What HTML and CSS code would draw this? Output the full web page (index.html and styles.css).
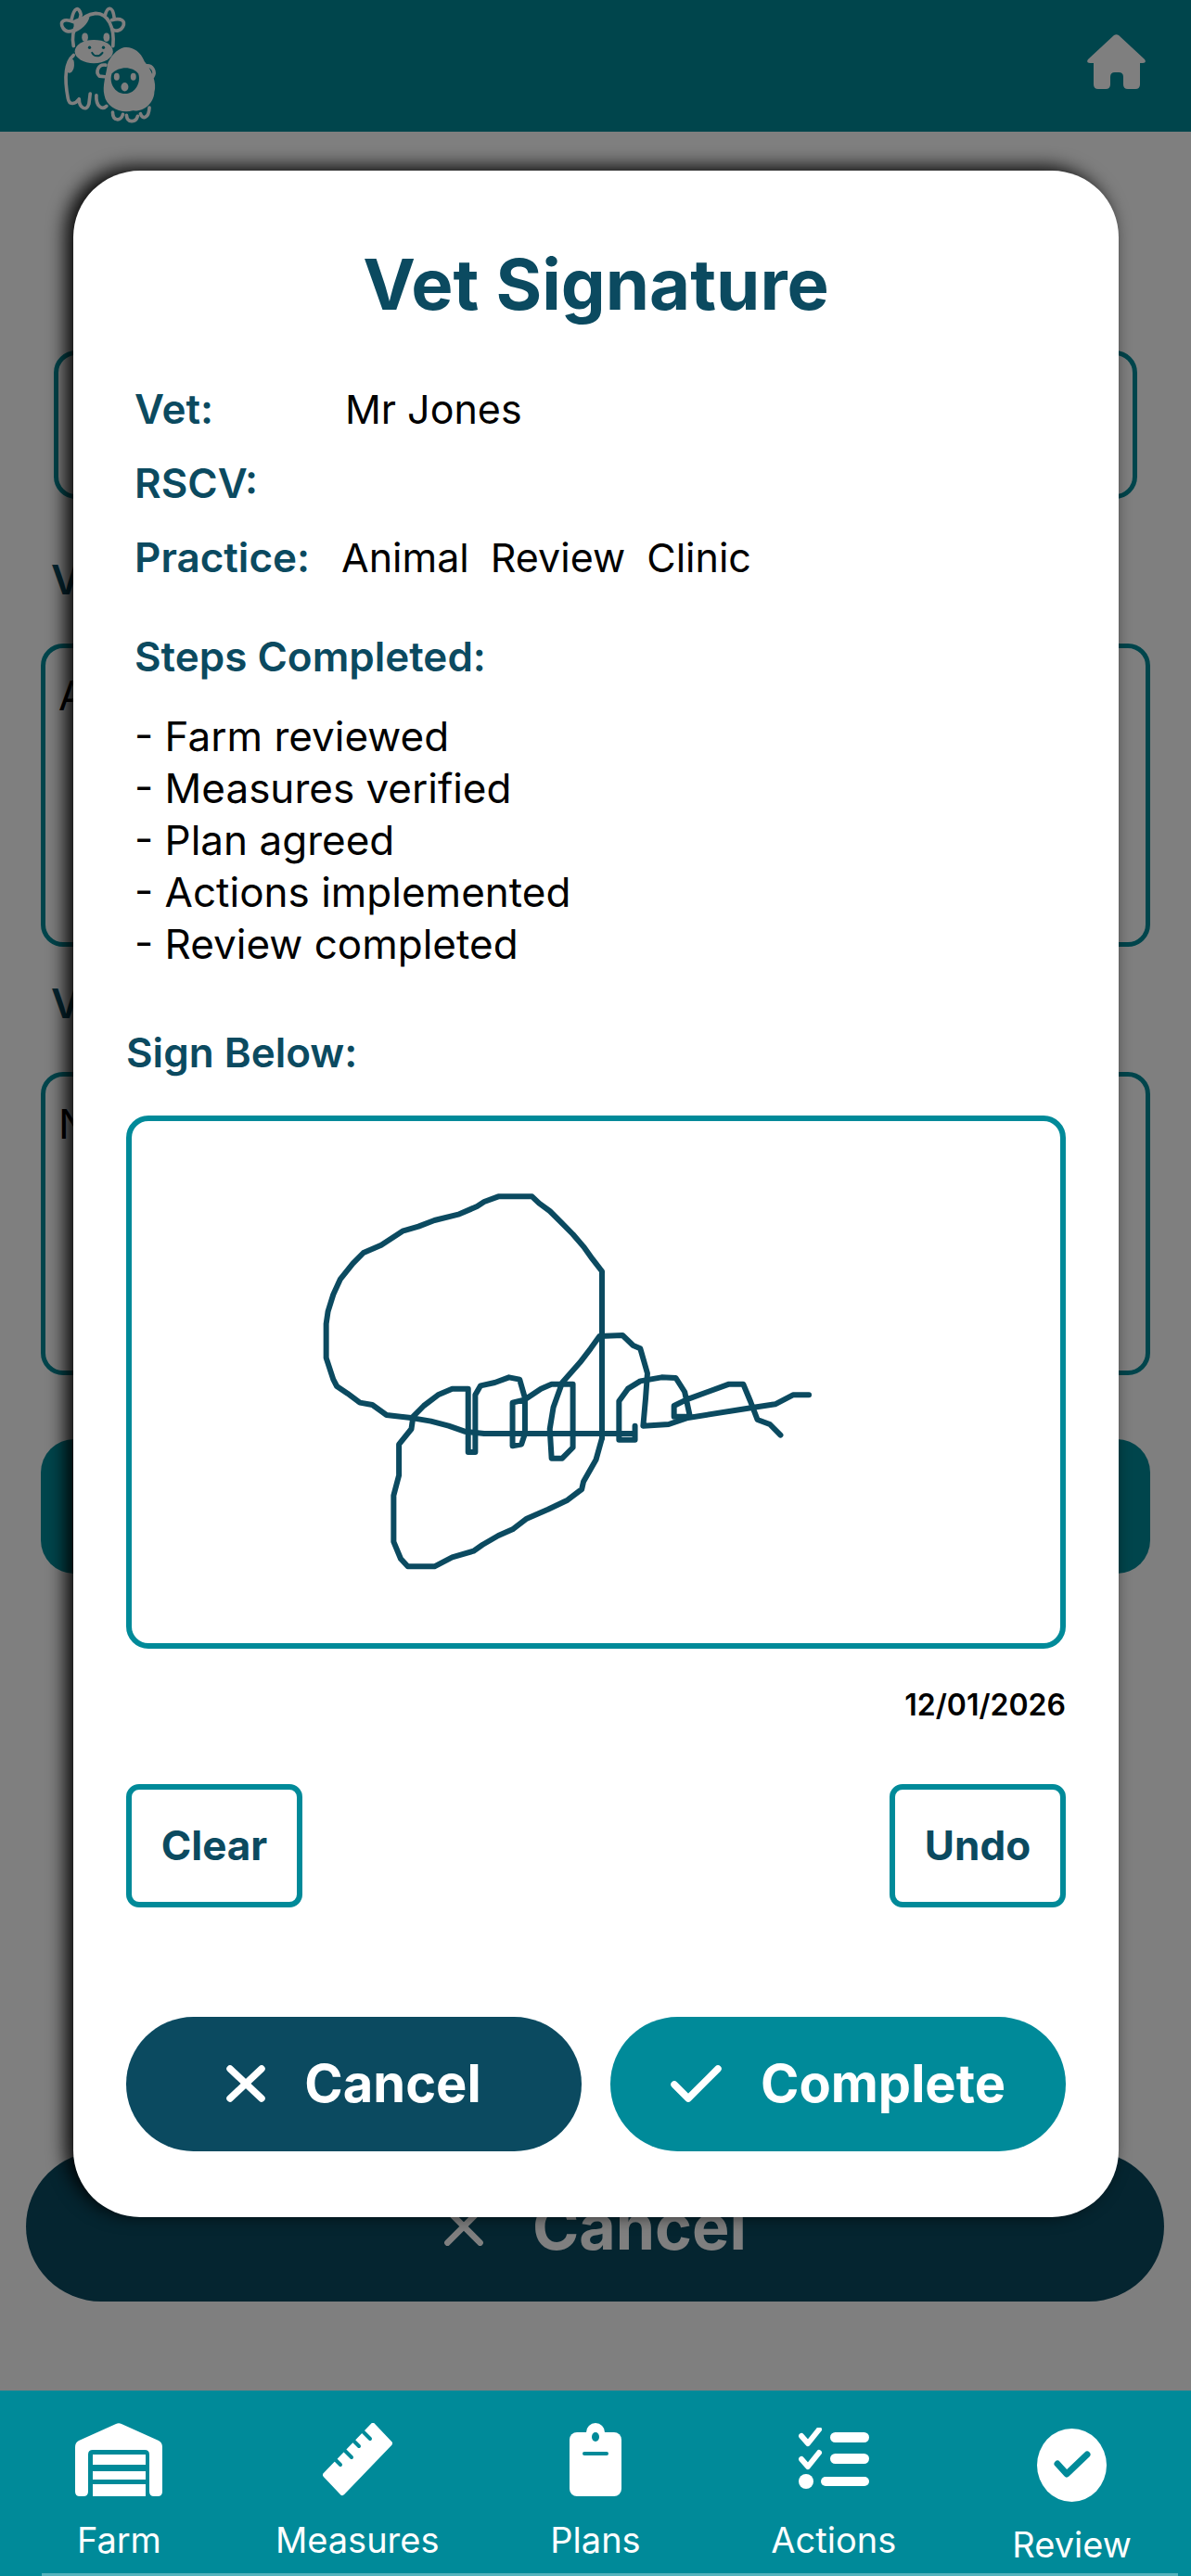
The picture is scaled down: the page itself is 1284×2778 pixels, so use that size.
FILE: index.html
```html
<!DOCTYPE html>
<html lang="en">
<head>
    <meta charset="UTF-8">
    <meta name="viewport" content="width=device-width, initial-scale=1.0">
    <title>Vet Signature</title>
    <link rel="stylesheet" href="styles.css">
</head>
<body>
    <header class="top-bar">
        <!-- cow and sheep logo -->
        <svg class="logo" viewBox="180 10 340 400">
            <g fill="none" stroke="#fff" stroke-width="11" stroke-linecap="round" stroke-linejoin="round">
                <path d="M232 62 C240 25 255 20 262 48 L258 66"/>
                <path d="M340 52 C348 20 365 20 370 58"/>
                <path d="M238 72 C205 58 192 72 204 92 C212 106 228 104 236 100"/>
                <path d="M362 66 C392 58 408 68 398 88 C390 102 376 102 368 98"/>
                <path d="M238 150 C226 90 262 50 310 44 C350 44 372 90 366 150"/>
                <path d="M238 180 C215 200 205 240 220 320 C224 345 245 338 256 322 C256 350 280 365 288 338 L292 305 M312 310 C310 345 330 360 345 345"/>
                <path d="M365 365 C365 395 392 395 398 372 M410 375 C412 400 440 400 446 378 M455 370 C462 390 482 385 484 350"/>
                <path d="M342 212 C318 208 308 235 322 248 L340 250"/>
                <path d="M470 215 C495 210 505 235 495 250"/>
            </g>
            <path d="M238 66 C250 62 270 50 290 56 C284 80 262 100 240 106 Z" fill="#fff"/>
            <ellipse cx="304" cy="168" rx="62" ry="38" fill="#fff"/>
            <ellipse cx="275" cy="122" rx="10" ry="14" fill="#fff"/>
            <ellipse cx="345" cy="122" rx="10" ry="14" fill="#fff"/>
            <path d="M212 225 C225 195 240 180 240 210 C240 235 222 250 212 225 Z" fill="#fff"/>
            <g fill="#008a99">
                <circle cx="290" cy="155" r="5"/>
                <circle cx="335" cy="155" r="5"/>
            </g>
            <path d="M298 172 C305 186 322 186 332 172" fill="none" stroke="#008a99" stroke-width="6" stroke-linecap="round"/>
            <path d="M400 155 C425 150 455 165 468 200 C490 225 510 270 500 300 C500 330 470 365 430 360 C390 370 345 350 338 310 C330 280 345 240 348 210 C355 185 380 160 400 155 Z" fill="#fff"/>
            <path d="M362 240 C385 215 430 215 448 240 C458 265 440 305 405 305 C372 305 352 270 362 240 Z" fill="#008a99"/>
            <ellipse cx="378" cy="250" rx="9" ry="12" fill="#fff"/>
            <ellipse cx="432" cy="250" rx="9" ry="12" fill="#fff"/>
            <ellipse cx="404" cy="283" rx="12" ry="14" fill="#fff"/>
        </svg>
        <svg class="home-icon" viewBox="0 0 63 59">
            <path d="M29 1 Q31.500 -0.500 34 1 L62 27 Q64.500 31 60 31 H57 V54 Q57 59 52 59 H44 Q39 59 39 54 V46 Q39 41 34 41 H30 Q25 41 25 46 V54 Q25 59 20 59 H12 Q7 59 7 54 V31 H3 Q-1.500 31 1 27 Z" fill="#fff"/>
        </svg>
    </header>

    <main class="review-page">
        <div class="summary-card"></div>
        <label class="field-label">Vet</label>
        <div class="field-box">A</div>
        <label class="field-label second">V</label>
        <div class="field-box second">N</div>
        <button class="page-btn save-btn"></button>
        <button class="page-btn cancel-btn">
            <svg class="btn-icon" viewBox="0 0 40 40"><path d="M4 4 L36 36 M36 4 L4 36" fill="none" stroke="#fff" stroke-width="6" stroke-linecap="round"/></svg>
            Cancel
        </button>
    </main>

    <div class="overlay">
        <section class="modal">
            <h1 class="modal-title">Vet Signature</h1>
            <div class="info-rows">
                <div class="info-row"><span class="info-label">Vet:</span><span class="info-value">Mr Jones</span></div>
                <div class="info-row"><span class="info-label">RSCV:</span></div>
                <div class="info-row"><span class="info-label">Practice:</span><span class="info-value practice">Animal Review Clinic</span></div>
            </div>
            <h2 class="steps-title">Steps Completed:</h2>
            <ul class="steps-list">
                <li>- Farm reviewed</li>
                <li>- Measures verified</li>
                <li>- Plan agreed</li>
                <li>- Actions implemented</li>
                <li>- Review completed</li>
            </ul>
            <h2 class="sign-title">Sign Below:</h2>
            <div class="sign-box">
                <svg class="signature" viewBox="0 0 1568 1440" preserveAspectRatio="none">
                    <g fill="none" stroke="#0b4a60" stroke-width="6" stroke-linejoin="round" stroke-linecap="round">
                        <path vector-effect="non-scaling-stroke" d="M912 930 L912 390 L885 350 L860 310 L830 270 L800 235 L765 195 L735 170 L715 148 L620 148 L580 165 L560 180 L510 205 L440 225 L395 245 L350 260 L290 305 L240 330 L210 365 L175 415 L155 465 L140 520 L135 560 L135 670 L155 740 L165 762 L195 785 L230 815 L265 822 L305 855 L380 865 L430 875 L480 890 L525 908 L580 915 L1000 915"/>
                        <path vector-effect="non-scaling-stroke" d="M912 930 L895 1000 L860 1070 L855 1095 L815 1130 L760 1160 L700 1190 L660 1225 L620 1245 L575 1275 L550 1295 L490 1315 L440 1345 L365 1345 L345 1320 L325 1265 L325 1115 L340 1050 L340 950 L375 900 L380 860 L410 825 L450 790 L490 770 L535 770 L535 975 L555 975 L555 790 L570 760 L610 750 L650 733 L680 740 L695 800 L695 915 L685 950 L660 955 L660 815 L695 805 L740 770 L770 755 L830 755 L830 960 L800 995 L770 995 L765 900 L775 830 L800 750 L850 685 L880 640 L905 600 L970 597 L1000 630 L1020 640 L1040 720 L1035 800 L1028 890 L1100 885 L1150 865 L1340 830 L1400 820 L1450 790 L1495 790"/>
                        <path vector-effect="non-scaling-stroke" d="M1005 890 L1005 935 L960 935 L960 810 L985 770 L1020 745 L1080 733 L1120 735 L1145 780 L1160 860 L1115 860 L1115 825 L1150 805 L1270 755 L1310 755 L1330 810 L1350 870 L1385 885 L1415 920"/>
                    </g>
                </svg>
            </div>
            <div class="sign-date">12/01/2026</div>
            <div class="sign-tools">
                <button class="tool-btn">Clear</button>
                <button class="tool-btn">Undo</button>
            </div>
            <div class="modal-actions">
                <button class="action-btn dark">
                    <svg class="action-icon" viewBox="0 0 42 40"><path d="M4 4 L38 36 M38 4 L4 36" fill="none" stroke="#fff" stroke-width="7.500" stroke-linecap="round"/></svg>
                    Cancel
                </button>
                <button class="action-btn teal">
                    <svg class="action-icon wide" viewBox="0 0 55 40"><path d="M4 21 L19 36 L51 4" fill="none" stroke="#fff" stroke-width="7.500" stroke-linecap="round" stroke-linejoin="round"/></svg>
                    Complete
                </button>
            </div>
        </section>
    </div>

    <nav class="bottom-nav">
        <a class="nav-item" href="#">
            <svg class="nav-icon" width="94" height="79" viewBox="0 0 94 79">
                <path d="M44 1 Q47 -0.500 50 1 L90 19 Q94 21 94 26 V74 Q94 79 89 79 H85 Q80 79 80 74 V34 Q80 29 75 29 H19 Q14 29 14 34 V74 Q14 79 9 79 H5 Q0 79 0 74 V26 Q0 21 4 19 Z" fill="#fff"/>
                <path d="M19 34 H76 V45 H19 Z M19 52 H76 V61 H19 Z M19 66 H76 V79 H19 Z" fill="#fff"/>
            </svg>
            <span>Farm</span>
        </a>
        <a class="nav-item" href="#">
            <svg class="nav-icon" width="75" height="79" viewBox="0 0 75 79">
                <path d="M54 3 L72 22 L21 75 L3 56 Z" fill="#fff" stroke="#fff" stroke-width="6" stroke-linejoin="round"/>
                <path d="M43 9 L51 17 M33 19 L39 25 M23 29 L31 37 M13 39 L19 45" fill="none" stroke="#008a99" stroke-width="4" stroke-linecap="round"/>
            </svg>
            <span>Measures</span>
        </a>
        <a class="nav-item" href="#">
            <svg class="nav-icon" width="56" height="79" viewBox="0 0 56 79">
                <circle cx="28" cy="10" r="10" fill="#fff"/>
                <rect x="0" y="10" width="56" height="69" rx="8" fill="#fff"/>
                <ellipse cx="28" cy="15" rx="4" ry="5" fill="#008a99"/>
                <rect x="14" y="31" width="28" height="4" rx="2" fill="#008a99"/>
            </svg>
            <span>Plans</span>
        </a>
        <a class="nav-item" href="#">
            <svg class="nav-icon checklist" width="76" height="67" viewBox="0 0 76 67">
                <path d="M3 9 L10 17 L22 2 M3 34 L10 42 L22 27" fill="none" stroke="#fff" stroke-width="6" stroke-linecap="round" stroke-linejoin="round"/>
                <rect x="34" y="5" width="42" height="11" rx="5.500" fill="#fff"/>
                <rect x="34" y="28" width="42" height="11" rx="5.500" fill="#fff"/>
                <rect x="24" y="53" width="52" height="10" rx="5" fill="#fff"/>
                <ellipse cx="8" cy="58" rx="8" ry="8" fill="#fff"/>
            </svg>
            <span>Actions</span>
        </a>
        <a class="nav-item active" href="#">
            <svg class="nav-icon" width="75" height="79" viewBox="0 0 75 79">
                <ellipse cx="37.500" cy="39.500" rx="37.500" ry="39.500" fill="#fff"/>
                <path d="M22 38 L32 49 L54 28" fill="none" stroke="#008a99" stroke-width="7" stroke-linecap="round" stroke-linejoin="round"/>
            </svg>
            <span>Review</span>
        </a>
    </nav>
</body>
</html>
```
FILE: styles.css
```css
* {
    box-sizing: border-box;
}

body {
    position: relative;
    display: flex;
    flex-direction: column;
    width: 1284px;
    height: 2778px;
    margin: 0;
    overflow: hidden;
    font-family: Inter, "Noto Sans", sans-serif;
    background-color: #ffffff;
    color: #000;
}

/* top bar */
.top-bar {
    display: flex;
    justify-content: space-between;
    align-items: flex-start;
    flex: 0 0 142px;
    padding: 3px 49px 0 60px;
    background-color: #008a99;
}

.logo {
    width: 113px;
    height: 133px;
}

.home-icon {
    width: 63px;
    height: 59px;
    margin-top: 34px;
}

/* page under the popup */
.review-page {
    flex: 1;
    padding: 236px 44px 0;
}

.summary-card {
    height: 160px;
    margin: 0 14px 60px;
    border: 5px solid #008a99;
    border-radius: 24px;
}

.field-label {
    display: block;
    height: 50px;
    margin-left: 11px;
    font-size: 44px;
    font-weight: 600;
    color: #0b4a60;
}

.field-label.second {
    margin-top: 34px;
}

.field-box {
    height: 327px;
    margin-top: 46px;
    padding: 24px 14px;
    font-size: 44px;
    border: 5px solid #008a99;
    border-radius: 24px;
}

.field-box.second {
    margin-top: 51px;
}

.page-btn {
    display: flex;
    justify-content: center;
    align-items: center;
    gap: 52px;
    border: none;
    color: white;
    font-family: inherit;
    font-weight: 700;
}

.save-btn {
    width: 100%;
    height: 145px;
    margin-top: 69px;
    background-color: #008a99;
    border-radius: 36px;
}

.cancel-btn {
    width: 1227px;
    height: 162px;
    margin: 623px 0 0 -16px;
    padding-right: 6px;
    background-color: #0a4a60;
    border-radius: 81px;
    font-size: 68px;
}

.btn-icon {
    width: 44px;
    height: 44px;
}

/* popup */
.overlay {
    position: absolute;
    top: 0;
    left: 0;
    width: 100%;
    height: 2578px;
    padding: 184px 78px 0 79px;
    background-color: rgba(0, 0, 0, 0.5);
}

.modal {
    height: 2207px;
    padding: 79px 57px 0;
    background-color: #ffffff;
    border-radius: 72px;
    box-shadow: -8px -4px 20px rgba(0, 0, 0, 0.95);
}

.modal-title {
    margin: 0 0 67px;
    font-size: 76px;
    line-height: 86px;
    font-weight: 700;
    text-align: center;
    color: #0b4a60;
}

.info-rows {
    display: flex;
    flex-direction: column;
    gap: 30px;
    padding-left: 9px;
}

.info-row {
    display: flex;
    height: 50px;
    font-size: 43px;
    line-height: 50px;
}

.info-label {
    width: 227px;
    font-size: 44px;
    font-weight: 600;
    color: #0b4a60;
}

.info-value.practice {
    margin-left: -4px;
    word-spacing: 11px;
}

.steps-title,
.sign-title {
    margin: 0;
    font-size: 44px;
    line-height: 50px;
    font-weight: 600;
    color: #0b4a60;
}

.steps-title {
    margin: 57px 0 0 9px;
}

.steps-list {
    margin: 33px 0 0 9px;
    padding: 0;
    list-style: none;
    font-size: 44px;
    line-height: 56px;
}

.sign-title {
    margin-top: 64px;
}

.sign-box {
    height: 575px;
    margin-top: 43px;
    padding: 32px 0 0 158px;
    border: 6px solid #008a99;
    border-radius: 24px;
}

.signature {
    display: block;
    width: 600px;
    height: 480px;
}

.sign-date {
    margin-top: 41px;
    font-size: 32px;
    line-height: 40px;
    font-weight: 600;
    text-align: right;
}

.sign-tools {
    display: flex;
    justify-content: space-between;
    margin-top: 65px;
}

.tool-btn {
    width: 190px;
    height: 133px;
    padding-bottom: 3px;
    background: #fff;
    border: 6px solid #008a99;
    border-radius: 14px;
    font-family: inherit;
    font-size: 44px;
    font-weight: 700;
    color: #0b4a60;
}

.modal-actions {
    display: flex;
    gap: 31px;
    margin-top: 118px;
}

.action-btn {
    display: flex;
    flex: 1;
    justify-content: center;
    align-items: center;
    gap: 42px;
    height: 145px;
    padding-bottom: 2px;
    border: none;
    border-radius: 73px;
    font-family: inherit;
    font-size: 56px;
    font-weight: 700;
    color: white;
}

.action-btn.dark {
    background-color: #0b4a60;
}

.action-btn.teal {
    background-color: #008a99;
}

.action-icon {
    width: 42px;
    height: 40px;
}

.action-icon.wide {
    width: 55px;
}

/* bottom tabs */
.bottom-nav {
    position: relative;
    display: grid;
    grid-template-columns: repeat(5, 1fr);
    flex: 0 0 200px;
    padding-top: 35px;
    background-color: #008a99;
}

.bottom-nav::after {
    content: "";
    position: absolute;
    left: 45px;
    right: 14px;
    bottom: 0;
    height: 3px;
    background-color: #55b3bd;
}

.nav-item {
    display: flex;
    flex-direction: column;
    align-items: center;
    text-decoration: none;
    color: white;
    font-size: 38px;
    line-height: 46px;
}

.nav-item .nav-icon {
    display: block;
    margin-bottom: 24px;
}

.nav-item .checklist {
    margin: 5px 0 31px;
}

.nav-item.active {
    padding-top: 6px;
}

.nav-item.active .nav-icon {
    margin-bottom: 23px;
}
```
